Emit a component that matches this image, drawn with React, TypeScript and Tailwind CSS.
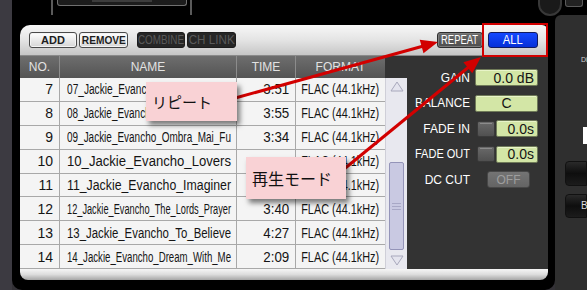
import React from "react";

let ctx: CanvasRenderingContext2D | null = null;
function measure(text: string, size: number, bold = false) {
  if (!ctx) ctx = document.createElement("canvas").getContext("2d");
  if (!ctx) return text.length * size * 0.55;
  ctx.font = `${bold ? "bold " : ""}${size}px "Liberation Sans", Arial, sans-serif`;
  return ctx.measureText(text).width;
}

function Fit({
  text,
  size,
  max,
  bold = false,
  origin = "left",
}: {
  text: string;
  size: number;
  max: number;
  bold?: boolean;
  origin?: string;
}) {
  const w = measure(text, size, bold);
  const s = Math.min(1, max / w);
  return (
    <span
      className="inline-block whitespace-nowrap"
      style={{ transform: `scaleX(${s})`, transformOrigin: origin }}
    >
      {text}
    </span>
  );
}

const rows = [
  { no: 7, name: "07_Jackie_Evancho_Nella_Fantasia", time: "3:51" },
  { no: 8, name: "08_Jackie_Evancho_Nessun_Dorma", time: "3:55" },
  { no: 9, name: "09_Jackie_Evancho_Ombra_Mai_Fu", time: "3:34" },
  { no: 10, name: "10_Jackie_Evancho_Lovers", time: "" },
  { no: 11, name: "11_Jackie_Evancho_Imaginer", time: "" },
  { no: 12, name: "12_Jackie_Evancho_The_Lords_Prayer", time: "3:40" },
  { no: 13, name: "13_Jackie_Evancho_To_Believe", time: "4:27" },
  { no: 14, name: "14_Jackie_Evancho_Dream_With_Me", time: "2:09" },
];

function arrow(sx: number, sy: number, tx: number, ty: number, L = 17, W = 7) {
  const dx = tx - sx;
  const dy = ty - sy;
  const len = Math.hypot(dx, dy);
  const ux = dx / len;
  const uy = dy / len;
  const bx = tx - ux * L;
  const by = ty - uy * L;
  const nx = -uy;
  const ny = ux;
  return {
    line: { x1: sx, y1: sy, x2: bx + ux * 2, y2: by + uy * 2 },
    head: `${tx},${ty} ${bx + nx * W},${by + ny * W} ${bx - nx * W},${by - ny * W}`,
  };
}

function LightBtn({ label, w, className = "" }: { label: string; w: string; className?: string }) {
  return (
    <div
      className={`${w} ${className} h-[16px] rounded-[3px] border border-[#4a4a4a] bg-linear-to-b from-[#ffffff] to-[#d6d6d6] shadow-[inset_0_0_0_1px_#f4f4f4] flex items-center justify-center text-[11px] font-bold text-[#1e1e1e] leading-none`}
    >
      <Fit text={label} size={11} max={44} bold origin="center" />
    </div>
  );
}

function DarkBtn({ label, w, className = "" }: { label: string; w: string; className?: string }) {
  return (
    <div
      className={`${w} ${className} h-[16px] rounded-[3px] bg-[#262626] border border-[#1c1c1c] flex items-center justify-center text-[12px] text-[#5a5a5a] leading-none`}
    >
      <Fit text={label} size={12} max={46} origin="center" />
    </div>
  );
}

function Row({ r }: { r: (typeof rows)[number] }) {
  return (
    <div className="flex border-b border-[#a8a8a8] bg-[#f4f4f4] text-[14px] text-[#141414] leading-none">
      <div className="w-[40px] flex items-center justify-end pr-[6px] border-r border-[#a8a8a8]">{r.no}</div>
      <div className="w-[177px] flex items-center pl-[7px] overflow-hidden border-r border-[#a8a8a8]">
        <Fit text={r.name} size={14} max={164} />
      </div>
      <div className="w-[59px] flex items-center justify-end pr-[6px] border-r border-[#a8a8a8]">
        {r.time && <Fit text={r.time} size={14} max={26} origin="right" />}
      </div>
      <div className="w-[89px] flex items-center justify-center">
        <Fit text="FLAC (44.1kHz)" size={14} max={78} origin="center" />
      </div>
    </div>
  );
}

function Label({ text }: { text: string }) {
  return (
    <div className="w-[63px] flex justify-end text-[12px] text-white leading-none">
      <Fit text={text} size={12} max={text.length > 6 ? 55 : 52} origin="right" />
    </div>
  );
}

function GreenBox({ children, className = "" }: { children: React.ReactNode; className?: string }) {
  return (
    <div
      className={`h-[17px] rounded-[2px] border border-[#6f7a58] bg-[#d3e6a6] shadow-[inset_0_1px_0_#e8f4c8] flex items-center text-[14px] text-[#151515] leading-none ${className}`}
    >
      {children}
    </div>
  );
}

function Square() {
  return (
    <div className="w-[18px] h-[16px] rounded-[2px] border border-[#3a3a3a] bg-linear-to-b from-[#6a6a6a] to-[#505050] flex flex-col items-center">
      <div className="mt-[1px] w-[12px] h-[1px] bg-[#8c8c8c]" />
    </div>
  );
}

export default function App() {
  const a1 = arrow(228, 100, 438, 42);
  const a2 = arrow(338, 174, 481, 57);
  return (
    <div className="relative w-[587px] h-[290px] overflow-hidden bg-[#333136] flex font-['Liberation_Sans',Arial,sans-serif]">
      {/* left strip */}
      <div className="w-[12px] h-full bg-[#3c3a41]" />

      {/* main column */}
      <div className="w-[543px] h-full bg-black rounded-b-[10px] flex flex-col">
        {/* top device deco */}
        <div className="h-[25px] flex items-start">
          <div className="ml-[39px] w-[2px] h-[15px] bg-[#5a5a5a]" />
          <div className="ml-[4px] w-[130px] h-[6px] bg-[#1c1c1c] border border-t-0 border-[#707070] rounded-b-[3px] flex justify-center">
            <div className="w-[60px] h-[2px] bg-[#3c3c3c]" />
          </div>
          <div className="ml-[3px] w-[2px] h-[15px] bg-[#5a5a5a]" />
        </div>

        {/* panel */}
        <div className="ml-[8px] w-[528px] h-[255px] flex flex-col">
          {/* toolbar */}
          <div className="h-[31px] rounded-tl-[10px] rounded-tr-[6px] bg-linear-to-b from-[#f7f7f7] via-[#e4e4e4] to-[#c6c6c6] border-b border-[#8a8a8a] flex items-start pt-[7px] pl-[9px] pr-[10px]">
            <LightBtn label="ADD" w="w-[48px]" />
            <LightBtn label="REMOVE" w="w-[49px]" className="ml-[2px]" />
            <DarkBtn label="COMBINE" w="w-[48px]" className="ml-[9px]" />
            <DarkBtn label="CH LINK" w="w-[49px]" className="ml-[2px]" />
            <div className="flex-1" />
            <div className="w-[46px] h-[16px] rounded-[3px] border border-[#2e2e2e] bg-linear-to-b from-[#6a6a6a] to-[#4e4e4e] shadow-[inset_0_0_0_1px_#7c7c7c] flex items-center justify-center text-[12px] text-white leading-none">
              <Fit text="REPEAT" size={12} max={37} origin="center" />
            </div>
            <div className="ml-[5px] w-[50px] h-[16px] rounded-[3px] border border-[#101a60] bg-linear-to-b from-[#1448ff] to-[#0630d8] flex items-center justify-center text-[12px] text-white leading-none">
              <Fit text="ALL" size={12} max={20} origin="center" />
            </div>
          </div>

          {/* body */}
          <div className="h-[213px] flex">
            <div className="w-[365px] flex flex-col">
              <div className="h-[22px] flex bg-linear-to-b from-[#6e6e6e] to-[#545454] text-[12px] text-[#e2e2e2] leading-none">
                <div className="w-[40px] flex items-center justify-center border-r border-[#8c8c8c]">NO.</div>
                <div className="w-[177px] flex items-center justify-center border-r border-[#8c8c8c]">NAME</div>
                <div className="w-[59px] flex items-center justify-center border-r border-[#8c8c8c]">TIME</div>
                <div className="w-[89px] flex items-center justify-center">FORMAT</div>
              </div>
              <div className="h-[191px] grid grid-rows-[repeat(8,minmax(0,1fr))]">
                {rows.map((r) => (
                  <Row key={r.no} r={r} />
                ))}
              </div>
            </div>

            <div className="w-[163px] bg-[#333333] flex">
              {/* scrollbar */}
              <div className="w-[22px] pt-[22px] flex flex-col">
                <div className="h-[191px] bg-[#e8e8ef] border-l border-[#cfcfd8] flex flex-col">
                  <div className="h-[17px] flex items-center justify-center">
                    <svg width="14" height="11" viewBox="0 0 14 11">
                      <polygon points="7,1 13,10 1,10" fill="#e4e4ee" stroke="#a8a8bc" strokeWidth="1" />
                    </svg>
                  </div>
                  <div className="flex-1 pt-[67px] px-[3px]">
                    <div className="h-[88px] rounded-[2px] border border-[#9494b8] bg-[#c9c9e2] flex flex-col items-center justify-center gap-[2px]">
                      <div className="w-[9px] h-[1px] bg-[#a8a8c6]" />
                      <div className="w-[9px] h-[1px] bg-[#a8a8c6]" />
                      <div className="w-[9px] h-[1px] bg-[#a8a8c6]" />
                    </div>
                  </div>
                  <div className="h-[17px] flex items-center justify-center">
                    <svg width="14" height="11" viewBox="0 0 14 11">
                      <polygon points="1,1 13,1 7,10" fill="#e4e4ee" stroke="#a8a8bc" strokeWidth="1" />
                    </svg>
                  </div>
                </div>
              </div>

              {/* settings */}
              <div className="flex-1 pt-[13px] flex flex-col gap-[8.5px]">
                <div className="flex items-center gap-[5px]">
                  <Label text="GAIN" />
                  <GreenBox className="w-[63px] justify-end pr-[3px]">0.0 dB</GreenBox>
                </div>
                <div className="flex items-center gap-[5px]">
                  <Label text="BALANCE" />
                  <GreenBox className="w-[63px] justify-center">C</GreenBox>
                </div>
                <div className="flex items-center gap-[5px]">
                  <Label text="FADE IN" />
                  <div className="w-[63px] flex justify-end items-center gap-[1px]">
                    <Square />
                    <GreenBox className="w-[42px] justify-end pr-[3px]">0.0s</GreenBox>
                  </div>
                </div>
                <div className="flex items-center gap-[5px]">
                  <Label text="FADE OUT" />
                  <div className="w-[63px] flex justify-end items-center gap-[1px]">
                    <Square />
                    <GreenBox className="w-[42px] justify-end pr-[3px]">0.0s</GreenBox>
                  </div>
                </div>
                <div className="flex items-center gap-[5px]">
                  <Label text="DC CUT" />
                  <div className="ml-[12px] w-[43px] h-[17px] rounded-[3px] border border-[#474747] bg-linear-to-b from-[#747474] to-[#646464] flex items-center justify-center text-[12px] text-[#9e9e9e] leading-none">
                    OFF
                  </div>
                </div>
              </div>
            </div>
          </div>

          {/* bottom bar */}
          <div className="h-[11px] rounded-b-[8px] bg-linear-to-b from-[#f6f6f6] via-[#dcdcdc] to-[#a6a6a6]" />
        </div>
      </div>

      {/* right device panel */}
      <div className="w-[32px] h-full flex flex-col bg-black">
        <div className="h-[15px] flex items-start">
          <div className="ml-[10px] w-[18px] h-[7px] rounded-b-[3px] border border-t-0 border-[#5a5a5a] bg-[#222]" />
        </div>
        <div className="flex-1 bg-[#2f2f2f] rounded-tl-[6px] flex flex-col">
          <div className="mt-[41px] ml-[26px] text-[7px] leading-none text-[#cfcfcf]">Di</div>
          <div className="mt-[64px] ml-[28px] w-[4px] h-[17px] bg-white" />
          <div className="mt-[17px] ml-[10px] h-[25px] rounded-l-[4px] bg-linear-to-b from-[#2a2a2a] via-[#0e0e0e] to-[#1c1c1c] border border-[#111]" />
          <div className="mt-[8px] ml-[10px] h-[24px] rounded-l-[4px] bg-linear-to-b from-[#2a2a2a] via-[#0e0e0e] to-[#1c1c1c] border border-[#111] flex items-center pl-[15px] text-[10px] text-[#dcdcdc] leading-none">
            B
          </div>
        </div>
      </div>

      {/* knob deco */}
      <div className="absolute left-[538px] top-[-12px] w-[24px] h-[28px] rounded-full bg-[#1a1a1a] border-2 border-[#383838]" />

      {/* red highlight */}
      <div className="absolute left-[482px] top-[23px] w-[66px] h-[34px] border-2 border-[#d20000]" />

      {/* arrows */}
      <svg className="absolute left-0 top-0 pointer-events-none" width="587" height="290" viewBox="0 0 587 290">
        <line {...a1.line} stroke="#d20000" strokeWidth="3" />
        <polygon points={a1.head} fill="#d20000" />
        <line {...a2.line} stroke="#d20000" strokeWidth="3" />
        <polygon points={a2.head} fill="#d20000" />
      </svg>

      {/* callouts */}
      <div className="absolute left-[146px] top-[82px] w-[91px] h-[39px] bg-[#f9d2d5] shadow-[3px_4px_5px_rgba(0,0,0,0.5)] flex items-center pl-[6px] text-[15px] text-[#111] font-['Noto_Sans_CJK_JP',sans-serif] leading-none">
        リピート
      </div>
      <div className="absolute left-[246px] top-[157px] w-[100px] h-[42px] bg-[#f9d2d5] shadow-[3px_4px_5px_rgba(0,0,0,0.5)] flex items-center pl-[6px] text-[16px] text-[#111] font-['Noto_Sans_CJK_JP',sans-serif] leading-none">
        再生モード
      </div>
    </div>
  );
}
